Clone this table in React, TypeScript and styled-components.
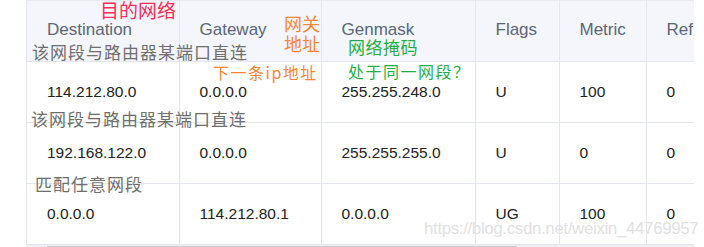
import React from 'react'
import styled, { createGlobalStyle } from 'styled-components'

const GlobalStyle = createGlobalStyle`
html, body {
  margin: 0;
  padding: 0;
  background: #ffffff;
}
`;

const Frame = styled.div`
position: relative;
width: 704px;
height: 247px;
overflow: hidden;
font-family: "Liberation Sans", Arial, sans-serif;
`;

const TableWrap = styled.div`
margin-left: 26px;
width: 668px;
overflow: hidden;
border-left: 1px solid #e1e4ee;
box-sizing: border-box;
`;

const Table = styled.table`
border-collapse: collapse;
table-layout: fixed;
width: 760px;
`;

const HeadCell = styled.th`
height: 61px;
padding: 0 0 2px 20px;
box-sizing: border-box;
background: #f4f6fb;
color: #5b6678;
font-size: 17px;
font-weight: normal;
text-align: left;
border-right: 1px solid #e3e6ef;
border-bottom: 1px solid #e3e6ef;
border-top: 1px solid #e8ebf2;
`;

const Cell = styled.td`
height: 61px;
padding: 0 0 0 20px;
box-sizing: border-box;
color: #222;
font-size: 15.5px;
text-align: left;
border-right: 1px solid #e3e6ef;
border-bottom: 1px solid #e3e6ef;
`;

const Scroll = styled.div`
margin-left: 26px;
width: 668px;
height: 3px;
background: #eef0f4;
display: flex;
`;

const Thumb = styled.div`
margin-left: 21px;
width: 470px;
height: 2px;
margin-top: 1px;
background: #c9cbd0;
`;

type NoteProps = {
  x: number;
  y: number;
  color: string;
  size?: number;
  spacing?: number;
}

// hand-written annotations laid over the table
const Note = styled.div<NoteProps>`
position: absolute;
left: ${({ x }) => `${x}px`};
top: ${({ y }) => `${y}px`};
color: ${({ color }) => color};
font-family: "Noto Sans CJK SC", "DejaVu Sans", sans-serif;
font-size: ${({ size = 17 }) => `${size}px`};
letter-spacing: ${({ spacing = 1 }) => `${spacing}px`};
line-height: 1.1;
white-space: pre;
`;

const Watermark = styled.div`
position: absolute;
left: 424px;
top: 219px;
color: #e2e2e2;
font-family: "Liberation Sans", Arial, sans-serif;
font-size: 17px;
letter-spacing: -0.4px;
white-space: nowrap;
`;

const widths = [152, 142, 154, 84, 87, 141]
const headers = ['Destination', 'Gateway', 'Genmask', 'Flags', 'Metric', 'Ref']
const rows = [
  ['114.212.80.0', '0.0.0.0', '255.255.248.0', 'U', '100', '0'],
  ['192.168.122.0', '0.0.0.0', '255.255.255.0', 'U', '0', '0'],
  ['0.0.0.0', '114.212.80.1', '0.0.0.0', 'UG', '100', '0'],
]

const GRAY = '#6e6e6e'
const RED = '#ff2d55'
const ORANGE = '#ff8533'
const GREEN = '#1fae4a'

export default () => {
  return (
    <Frame>
      <GlobalStyle />
      <TableWrap>
        <Table>
          <colgroup>
            {widths.map((w, i) => <col key={i} style={{ width: w }} />)}
          </colgroup>
          <thead>
            <tr>
              {headers.map(h => <HeadCell key={h}>{h}</HeadCell>)}
            </tr>
          </thead>
          <tbody>
            {rows.map((r, i) => (
              <tr key={i}>
                {r.map((c, j) => <Cell key={j}>{c}</Cell>)}
              </tr>
            ))}
          </tbody>
        </Table>
      </TableWrap>
      <Scroll>
        <Thumb />
      </Scroll>

      <Note x={100} y={0} color={RED} size={19} spacing={0}>目的网络</Note>
      <Note x={284} y={14} color={ORANGE} size={18} spacing={0}>{'网关\n地址'}</Note>
      <Note x={32} y={43} color={GRAY}>该网段与路由器某端口直连</Note>
      <Note x={348} y={38} color={GREEN} size={17} spacing={0.5}>网络掩码</Note>
      <Note x={213} y={64} color={ORANGE} size={16} spacing={1.5}>下一条ip地址</Note>
      <Note x={348} y={63} color={GREEN} size={16} spacing={1.5}>处于同一网段？</Note>
      <Note x={31} y={110} color={GRAY}>该网段与路由器某端口直连</Note>
      <Note x={35} y={175} color={GRAY}>匹配任意网段</Note>

      <Watermark>https://blog.csdn.net/weixin_44769957</Watermark>
    </Frame>
  )
}
